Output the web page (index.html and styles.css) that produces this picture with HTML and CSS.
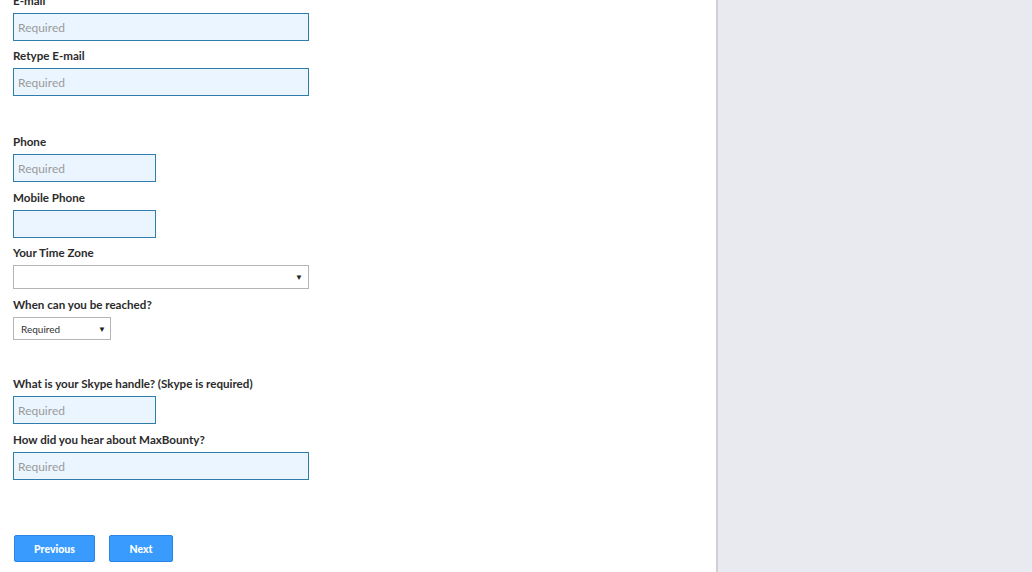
FILE: index.html
```html
<!DOCTYPE html>
<html>
<head>
<meta charset="utf-8">
<link rel="stylesheet" href="styles.css">
</head>
<body>
<div class="page">
  <main class="main">
    <form class="form">
      <div class="field">
        <label class="label">E-mail</label>
        <input class="input wide" placeholder="Required">
      </div>
      <div class="field">
        <label class="label">Retype E-mail</label>
        <input class="input wide" placeholder="Required">
      </div>
      <div class="spacer spacer-a"></div>
      <div class="field loose">
        <label class="label">Phone</label>
        <input class="input narrow" placeholder="Required">
      </div>
      <div class="field">
        <label class="label">Mobile Phone</label>
        <input class="input narrow">
      </div>
      <div class="field loose">
        <label class="label">Your Time Zone</label>
        <div class="select wide-select"><span class="select-text"></span><span class="arrow">▼</span></div>
      </div>
      <div class="field">
        <label class="label">When can you be reached?</label>
        <div class="select small-select"><span class="select-text">Required</span><span class="arrow">▼</span></div>
      </div>
      <div class="spacer spacer-b"></div>
      <div class="field loose">
        <label class="label">What is your Skype handle? (Skype is required)</label>
        <input class="input narrow" placeholder="Required">
      </div>
      <div class="field">
        <label class="label">How did you hear about MaxBounty?</label>
        <input class="input wide" placeholder="Required">
      </div>
      <div class="buttons">
        <button type="button" class="btn btn-prev">Previous</button>
        <button type="button" class="btn btn-next">Next</button>
      </div>
    </form>
  </main>
  <aside class="side"></aside>
</div>
</body>
</html>
```
FILE: styles.css
```css
* { box-sizing: border-box; }
html, body { margin: 0; padding: 0; height: 100%; overflow: hidden; }
body { font-family: Lato, "Liberation Sans", sans-serif; color: #222; background: #fff; }
.page { display: flex; height: 572px; }
.main { width: 716px; flex: none; padding-left: 13px; }
.side { flex: 1; background: #e8eaf0; border-left: 2px solid #cfd0d3; }
.form { display: flex; flex-direction: column; margin-top: -6px; }
.field { display: flex; flex-direction: column; align-items: flex-start; margin-bottom: 8px; }
.field.loose { margin-bottom: 9px; }
.label { font-size: 11.6px; font-weight: 700; line-height: 14px; height: 14px; margin-bottom: 5px; color: #2b2b2b; white-space: nowrap; }
.input { height: 28px; border: 1px solid #2f7ea9; background: #ebf5ff; padding: 0 4px; font-family: Lato, "Liberation Sans", sans-serif; font-size: 12px; color: #333; outline: none; border-radius: 0; }
.input::placeholder { color: #9a9a9a; }
.wide { width: 296px; }
.narrow { width: 143px; }
.spacer-a { height: 31px; }
.spacer-b { height: 29px; }
.select { display: flex; align-items: center; justify-content: space-between; border: 1px solid #b5b5b5; background: #fff; }
.wide-select { width: 296px; height: 24px; padding: 0 5px 0 7px; }
.small-select { width: 98px; height: 23px; padding: 0 4px 0 7px; }
.select-text { font-size: 10px; color: #333; }
.arrow { font-size: 8px; color: #222; }
.buttons { display: flex; gap: 14px; margin-top: 47px; padding-left: 1px; }
.btn { height: 27px; border: 1px solid #2a86e6; background: #3a9bff; color: #fff; font-family: Lato, "Liberation Sans", sans-serif; font-size: 10.5px; font-weight: 900; border-radius: 2px; padding: 0; }
.btn-prev { width: 81px; }
.btn-next { width: 64px; }
```
